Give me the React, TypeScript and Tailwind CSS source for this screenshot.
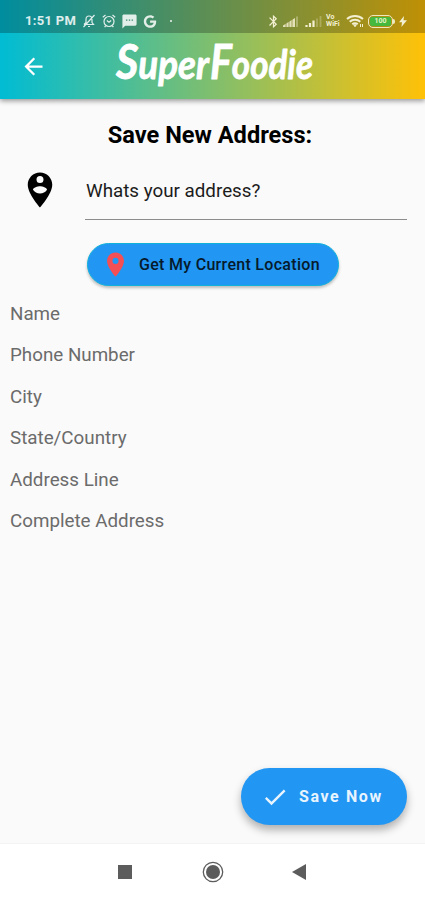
import type { ReactNode } from 'react'
import { FaGoogle } from 'react-icons/fa'
import {
  MdArrowBack,
  MdBluetooth,
  MdCheck,
  MdLocationOn,
  MdPersonPinCircle,
  MdSms,
} from 'react-icons/md'

const fields = [
  'Name',
  'Phone Number',
  'City',
  'State/Country',
  'Address Line',
  'Complete Address',
]

function Svg({ className, box, children }: { className: string; box: string; children: ReactNode }) {
  return (
    <svg className={className} viewBox={box} fill="none" stroke="currentColor" aria-hidden="true">
      {children}
    </svg>
  )
}

function StatusBar() {
  return (
    <div className="flex h-[33px] items-center bg-black/25 pt-[9px] pl-[25px] text-white/85">
      <span className="w-[57px] text-[13px] leading-4 font-bold tracking-[0.3px] whitespace-nowrap">1:51 PM</span>

      {/* muted bell */}
      <Svg className="h-[14px] w-[14px]" box="0 0 14 14">
        <path d="M2 10.5h9.5L10 8.5V5.4C10 3.4 8.8 2 7 2S4 3.4 4 5.4V8.5L2 10.5M6 12.5h2M12.5 1L1.5 13" strokeWidth="1.2" />
      </Svg>
      {/* alarm */}
      <Svg className="ml-[6px] h-[14px] w-[14px]" box="0 0 14 14">
        <circle cx="7" cy="7.5" r="5" strokeWidth="1.2" />
        <path d="M.8 3.3L3.5 1M13.2 3.3L10.5 1M4.8 6.5L7 8.2l2.2-1.7M3.6 11.8l-1 1.4M10.4 11.8l1 1.4" strokeWidth="1.2" />
      </Svg>
      <MdSms className="ml-[5px] h-[17px] w-[17px]" />
      <FaGoogle className="ml-[5px] h-[13px] w-[14px]" />
      <span className="ml-[13px] h-[2px] w-[2px] rounded-full bg-white/90" />

      <div className="ml-auto flex items-center pr-[18px] text-[#f3efd2]">
        <MdBluetooth className="h-[15px] w-[15px]" />
        <Svg className="ml-[2px] h-[12px] w-[17px]" box="0 0 17 12">
          <path d="M0 12v-1.5L12 3v9z" fill="currentColor" stroke="none" opacity=".85" />
          <path d="M3 12V8M6 12V6M9 12V4" stroke="#84892a" strokeWidth=".7" />
          <path d="M14 12V1.5" strokeWidth="1.8" opacity=".4" />
        </Svg>
        <Svg className="ml-[5px] h-[12px] w-[17px]" box="0 0 17 12">
          <path d="M1.5 12v-2M5 12V8M8.5 12V5.5" strokeWidth="2.2" />
          <path d="M12 12V3.5M15.5 12V1" strokeWidth="1.8" opacity=".3" />
        </Svg>
        <span className="ml-[4px] flex w-[16px] flex-col text-[7px] leading-[7px] font-bold">
          <span>Vo</span>
          <span>WiFi</span>
        </span>
        <Svg className="ml-[4px] h-[14px] w-[18px]" box="0 0 18 14">
          <path d="M1 5c4.6-4 11.4-4 16 0M3.7 7.8c3-2.7 7.6-2.7 10.6 0M6.3 10.3c1.5-1.4 3.9-1.4 5.4 0" strokeWidth="2" />
          <path d="M7.3 10.6L9 13l1.7-2.4z" fill="currentColor" strokeWidth=".5" />
          <path d="M14.5 10v3M16.5 10v3" strokeWidth="1" />
        </Svg>
        <span className="ml-[4px] flex h-[13px] w-[25px] items-center justify-center rounded-[5px] border-[1.5px] border-[#efe9c0] p-px">
          <span className="flex h-full w-full items-center justify-center rounded-[2px] bg-[#45b83e] text-[7px] leading-none font-bold text-[#e4f5c4]">100</span>
        </span>
        <span className="h-[5px] w-[2px] rounded-r bg-[#efe9c0]" />
        <Svg className="ml-[4px] h-[11px] w-[8px]" box="0 0 8 11">
          <path d="M5 0L0 6.3h3L2.4 11 8 4.3H4.5z" fill="currentColor" stroke="none" />
        </Svg>
      </div>
    </div>
  )
}

function Logo() {
  return (
    <svg
      className="ml-[69px] h-[60px] w-[204px] overflow-visible font-['Lato',sans-serif] font-bold italic"
      viewBox="0 0 204 60"
      fill="#fff"
      stroke="#fff"
      strokeWidth=".8"
      strokeLinejoin="round"
    >
      <text x="0" y="43" fontSize="40" textLength="93" lengthAdjust="spacingAndGlyphs">
        <tspan fontSize="47">S</tspan>uper
      </text>
      <text x="94" y="43" fontSize="40" textLength="103" lengthAdjust="spacingAndGlyphs">
        <tspan fontSize="47">F</tspan>oodie
      </text>
    </svg>
  )
}

export default function App() {
  return (
    <div className="flex h-[900px] w-[425px] flex-col overflow-hidden bg-[#fafafa] font-['Roboto',sans-serif]">
      <header className="h-[99px] shrink-0 bg-[linear-gradient(to_right,#00bcd4,#ffc107)] shadow-[0_2px_5px_rgba(0,0,0,0.4)]">
        <StatusBar />
        <div className="flex h-[66px] items-center pl-[20px] text-white">
          <MdArrowBack className="h-[27px] w-[27px]" />
          <Logo />
        </div>
      </header>

      <main className="flex flex-1 flex-col">
        <h1 className="mt-[20px] pr-[5px] text-center text-[23.6px] leading-[32px] font-bold text-black">
          Save New Address:
        </h1>

        <div className="mt-[13px] flex h-[56px] pr-[18px] pl-[19px]">
          <MdPersonPinCircle className="mt-[5px] h-[42px] w-[42px] text-black" />
          <div className="ml-[24px] flex-1 border-b border-[#8c8c8c] pt-[14px] pl-px text-[18.8px] leading-[26px] text-[#1c1c1c]">
            Whats your address?
          </div>
        </div>

        <button className="mt-[23px] ml-[87px] flex h-[43px] w-[252px] items-center rounded-full border border-[#10b2dc] bg-[#2196f3] pl-[13px] text-[16px] font-medium tracking-[0.3px] text-[#061a2b] shadow-[0_2px_3px_rgba(0,0,0,0.25)]">
          <MdLocationOn className="mr-[9px] h-[29px] w-[29px] text-[#f44f55]" />
          Get My Current Location
        </button>

        <ul className="mt-[8px] pl-[10px] text-[18.8px] text-[#6b6b6b]">
          {fields.map((field) => (
            <li key={field} className="h-[41.4px] leading-[41px]">
              {field}
            </li>
          ))}
        </ul>

        <button className="mt-auto mr-[18px] mb-[18px] flex h-[57px] w-[166px] items-center self-end rounded-full bg-[#2196f3] pl-[20px] text-[16px] font-bold tracking-[1.6px] text-[#e8f4fe] shadow-[0_5px_8px_rgba(0,0,0,0.3)]">
          <MdCheck className="mr-[10px] h-[28px] w-[28px]" />
          Save Now
        </button>
      </main>

      <nav className="flex h-[57px] shrink-0 items-center border-t border-[#f3f3f3] bg-white pl-[118px] text-[#5c5c5c]">
        <span className="h-[14px] w-[14px] bg-[#5c5c5c]" />
        <Svg className="ml-[70px] h-[22px] w-[22px]" box="0 0 22 22">
          <circle cx="11" cy="11" r="9.7" strokeWidth="1.3" />
          <circle cx="11" cy="11" r="7" fill="currentColor" stroke="none" />
        </Svg>
        <Svg className="ml-[68px] h-[16px] w-[14px]" box="0 0 14 16">
          <path d="M14 0v16L0 8z" fill="currentColor" stroke="none" />
        </Svg>
      </nav>
    </div>
  )
}
